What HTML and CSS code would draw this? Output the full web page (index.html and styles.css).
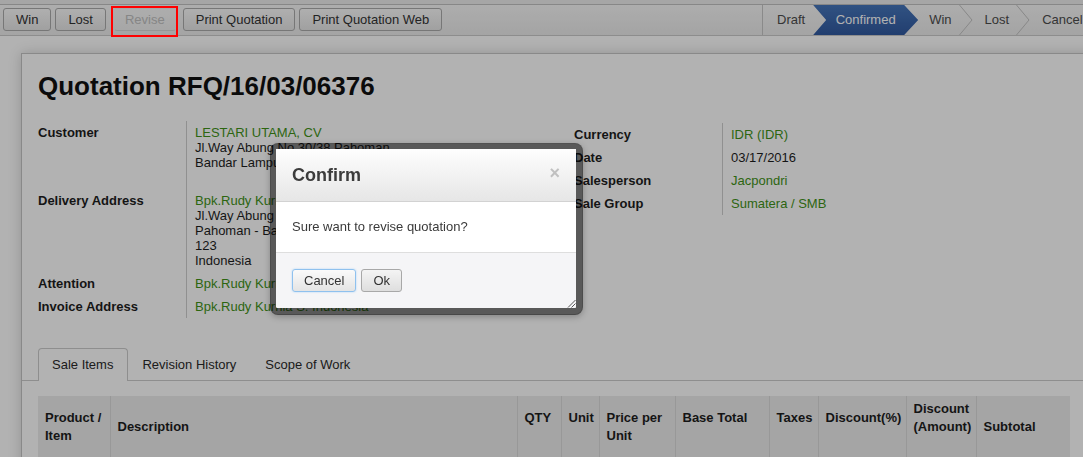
FILE: index.html
```html
<!DOCTYPE html>
<html>
<head>
<meta charset="utf-8">
<title>Quotation RFQ/16/03/06376</title>
<link rel="stylesheet" href="styles.css">
</head>
<body>
<div class="topband"></div>
<header class="topbar">
  <div class="actions">
    <button class="btn">Win</button>
    <button class="btn">Lost</button>
    <button class="btn disabled marked">Revise</button>
    <button class="btn">Print Quotation</button>
    <button class="btn">Print Quotation Web</button>
  </div>
  <div class="statusbar">
    <span class="st draft">Draft</span>
    <span class="st current">Confirmed</span>
    <span class="st">Win</span>
    <svg class="chev" width="14" height="30" viewBox="0 0 14 30"><polyline points="0.5,0 13,15 0.5,30" fill="none" stroke="#c2c2c2" stroke-width="1"/></svg>
    <span class="st">Lost</span>
    <svg class="chev" width="14" height="30" viewBox="0 0 14 30"><polyline points="0.5,0 13,15 0.5,30" fill="none" stroke="#c2c2c2" stroke-width="1"/></svg>
    <span class="st">Cancel</span>
  </div>
</header>

<main class="sheetbg">
  <div class="sheet">
    <h1 class="title">Quotation RFQ/16/03/06376</h1>
    <div class="groups">
      <table class="fields left">
        <tr><td class="lbl">Customer</td><td class="val"><span class="link">LESTARI UTAMA, CV</span><br>Jl.Way Abung No 30/38 Pahoman<br>Bandar Lampung<br>&nbsp;</td></tr>
        <tr><td class="lbl">Delivery Address</td><td class="val"><span class="link">Bpk.Rudy Kurnia S.</span><br>Jl.Way Abung No 30/38<br>Pahoman - Bandar Lampung<br>123<br>Indonesia</td></tr>
        <tr><td class="lbl">Attention</td><td class="val"><span class="link">Bpk.Rudy Kurnia S.</span></td></tr>
        <tr><td class="lbl">Invoice Address</td><td class="val"><span class="link">Bpk.Rudy Kurnia S. Indonesia</span></td></tr>
      </table>
      <table class="fields right">
        <tr><td class="lbl">Currency</td><td class="val"><span class="link">IDR (IDR)</span></td></tr>
        <tr><td class="lbl">Date</td><td class="val">03/17/2016</td></tr>
        <tr><td class="lbl">Salesperson</td><td class="val"><span class="link">Jacpondri</span></td></tr>
        <tr><td class="lbl">Sale Group</td><td class="val"><span class="link">Sumatera / SMB</span></td></tr>
      </table>
    </div>

    <ul class="tabs">
      <li class="tab active">Sale Items</li>
      <li class="tab">Revision History</li>
      <li class="tab">Scope of Work</li>
    </ul>

    <table class="lines">
      <colgroup>
        <col class="c1"><col class="c2"><col class="c3"><col class="c4"><col class="c5">
        <col class="c6"><col class="c7"><col class="c8"><col class="c9"><col class="c10">
      </colgroup>
      <thead>
        <tr>
          <th class="l1">Product /<br>Item</th>
          <th class="mid">Description</th>
          <th class="l1">QTY</th>
          <th class="l1">Unit</th>
          <th class="l1">Price per<br>Unit</th>
          <th class="l1">Base Total</th>
          <th class="l1">Taxes</th>
          <th class="l1">Discount(%)</th>
          <th class="hi">Discount<br>(Amount)</th>
          <th class="mid">Subtotal</th>
        </tr>
      </thead>
      <tbody>
        <tr><td></td><td></td><td></td><td></td><td></td><td></td><td></td><td></td><td></td><td></td></tr>
      </tbody>
    </table>
  </div>
</main>

<div class="overlay"></div>

<div class="dialog">
  <div class="dlg-head">
    <span class="dlg-title">Confirm</span>
    <span class="dlg-close">×</span>
  </div>
  <div class="dlg-body">Sure want to revise quotation?</div>
  <div class="dlg-foot">
    <button class="dbtn focus">Cancel</button>
    <button class="dbtn">Ok</button>
  </div>
  <svg class="grip" width="9" height="9" viewBox="0 0 9 9">
    <line x1="1" y1="8.5" x2="8.5" y2="1" stroke="#555" stroke-width="1"/>
    <line x1="4.5" y1="8.5" x2="8.5" y2="4.5" stroke="#555" stroke-width="1"/>
  </svg>
</div>
</body>
</html>
```

FILE: styles.css
```css
html, body {
  margin: 0;
  padding: 0;
  height: 100%;
  overflow: hidden;
}
body {
  font-family: "Liberation Sans", Arial, sans-serif;
  font-size: 13px;
  color: #222;
  background: #fff;
  width: 1083px;
}

.topband {
  height: 4px;
  background: #eeeeee;
  border-bottom: 1px solid #c2c2c2;
}

.topbar {
  display: flex;
  height: 30px;
  background: linear-gradient(#f8f8f8, #ebebeb);
  border-bottom: 1px solid #cbcbcb;
}

.actions {
  flex: 0 0 759px;
  display: flex;
  align-items: flex-start;
  gap: 4px;
  padding: 3px 0 0 3px;
}

.btn {
  position: relative;
  height: 23px;
  padding: 0 12px;
  font-family: "Liberation Sans", Arial, sans-serif;
  font-size: 13px;
  color: #333;
  background: linear-gradient(#fbfbfb, #e6e6e6);
  border: 1px solid #ababab;
  border-radius: 3px;
}
.btn.disabled {
  padding: 0 10px;
  margin: 0 3px 0 4px;
  color: #c0c0c0;
  border-color: transparent transparent #d6d6d6 transparent;
  background: linear-gradient(#f8f8f8, #efefef);
}
.btn.marked::after {
  content: "";
  position: absolute;
  left: -4px;
  top: -3px;
  right: -3px;
  bottom: -7px;
  border: 2px solid #ff0000;
  z-index: 300;
}

.statusbar {
  flex: none;
  display: flex;
  align-items: center;
  height: 30px;
  border-left: 1px solid #c6c6c6;
  color: #4c4c4c;
}
.st {
  flex: none;
  line-height: 30px;
  padding: 0 7px 0 12px;
}
.st.draft {
  padding: 0 8px 0 14px;
}
.st.current {
  width: 105px;
  padding: 0;
  text-align: center;
  color: #fff;
  background: linear-gradient(#4676bb, #31599f);
  clip-path: polygon(0 0, 91px 0, 105px 50%, 91px 100%, 0 100%, 13px 50%);
  margin-right: -1px;
}
.st.current + .st {
  padding-left: 12px;
}
.chev {
  flex: none;
  display: block;
}

.sheetbg {
  padding: 17px 0 0 21px;
}
.sheet {
  width: 1100px;
  min-height: 500px;
  border: 1px solid #c4c4c4;
  background: #fff;
  padding: 17px 16px 0 16px;
  box-shadow: 0 0 12px rgba(0, 0, 0, 0.18);
}

.title {
  margin: 0;
  font-size: 26px;
  line-height: 30px;
  font-weight: bold;
  color: #111;
}

.groups {
  display: flex;
  align-items: flex-start;
  margin-top: 20px;
}
.fields {
  border-collapse: collapse;
  line-height: 15px;
}
.fields.left {
  width: 536px;
}
.fields.right {
  margin-top: 2px;
}
.fields td {
  padding: 4px 0;
  vertical-align: top;
}
.fields td.lbl {
  width: 148px;
  font-weight: bold;
  color: #1e1e1e;
}
.fields td.val {
  border-left: 1px solid #cfcfcf;
  padding-left: 8px;
  color: #1e1e1e;
  white-space: nowrap;
}
.link {
  color: #3f9218;
}

.tabs {
  list-style: none;
  display: flex;
  margin: 30px -16px 0 -16px;
  padding: 0 16px;
  border-bottom: 1px solid #cccccc;
}
.tab {
  height: 31px;
  line-height: 31px;
  padding: 0 14px 0 13px;
  border: 1px solid transparent;
  border-bottom: 0;
  margin-bottom: -1px;
  color: #2a2a2a;
}
.tab.active {
  border-color: #cccccc;
  border-radius: 4px 4px 0 0;
  background: #fff;
  height: 32px;
}

.lines {
  margin-top: 15px;
  width: 1032px;
  border-collapse: collapse;
  table-layout: fixed;
}
.c1 { width: 72px; }
.c2 { width: 407px; }
.c3 { width: 44px; }
.c4 { width: 38px; }
.c5 { width: 76px; }
.c6 { width: 94px; }
.c7 { width: 49px; }
.c8 { width: 88px; }
.c9 { width: 70px; }
.c10 { width: 94px; }
.lines th {
  height: 64px;
  box-sizing: border-box;
  background: #ececec;
  border-left: 1px solid #dadada;
  text-align: left;
  vertical-align: top;
  font-weight: bold;
  line-height: 18px;
  padding: 13px 4px 0 7px;
  color: #1e1e1e;
  white-space: nowrap;
}
.lines th:first-child {
  border-left: 0;
}
.lines th.mid { padding-top: 22px; }
.lines th.hi { padding-top: 4px; }
.lines td {
  height: 30px;
}

.overlay {
  position: fixed;
  inset: 0;
  background: rgba(0, 0, 0, 0.3);
  z-index: 100;
}

.dialog {
  position: absolute;
  left: 270px;
  top: 143px;
  width: 300px;
  border-style: solid;
  border-color: rgba(0, 0, 0, 0.5);
  border-width: 6px 7px 7px 6px;
  border-radius: 8px;
  background: #fff;
  background-clip: padding-box;
  box-shadow: 0 2px 6px rgba(0, 0, 0, 0.25);
  z-index: 200;
  color: #444;
}
.dlg-head {
  display: flex;
  justify-content: space-between;
  align-items: center;
  height: 52px;
  padding: 0 16px;
  background: linear-gradient(#fefefe, #e6e6e6);
  border-bottom: 1px solid #d2d2d2;
}
.dlg-title {
  font-size: 18px;
  font-weight: bold;
  color: #3c3c3c;
}
.dlg-close {
  font-size: 18px;
  font-weight: bold;
  color: #c0c0c0;
  margin-right: 0;
  margin-top: -3px;
}
.dlg-body {
  padding: 17px 16px 17px;
  line-height: 16px;
  font-size: 13px;
  color: #3a3a3a;
  border-bottom: 1px solid #dedede;
}
.dlg-foot {
  display: flex;
  gap: 5px;
  height: 55px;
  box-sizing: border-box;
  padding: 16px 16px 0;
  background: #f5f5f7;
  border-radius: 0 0 2px 2px;
}
.dbtn {
  height: 23px;
  padding: 0 11px;
  font-family: "Liberation Sans", Arial, sans-serif;
  font-size: 13px;
  color: #333;
  border: 1px solid #a8a8a8;
  border-radius: 3px;
  background: linear-gradient(#f4f4f4, #dedede);
}
.dbtn.focus {
  border-color: #8fc1ee;
  box-shadow: 0 0 2px #a8d2f5;
  background: linear-gradient(#fafafa, #e4e4e4);
}
.grip {
  position: absolute;
  right: 0;
  bottom: 0;
}
```
